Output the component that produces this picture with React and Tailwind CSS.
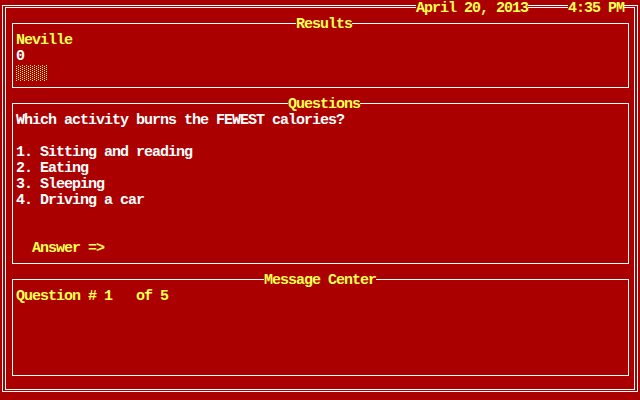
import React from 'react';

const Shade = () => (
    <svg width="32" height="16" className="block">
        <defs>
            <pattern id="shade" width="4" height="2" patternUnits="userSpaceOnUse">
                <rect x="2" y="0" width="1" height="1" fill="#ffff55" />
                <rect x="0" y="1" width="1" height="1" fill="#ffff55" />
            </pattern>
        </defs>
        <rect width="32" height="16" fill="url(#shade)" />
    </svg>
);

const Box = ({ title, titleLeft, height, children }) => (
    <div className={`relative ml-[6px] mr-[5px] mt-[15px] border border-white pt-[9px] pl-[3px] ${height}`}>
        <span className={`absolute top-[-7px] ${titleLeft} h-[16px] bg-[#aa0000] text-[#ffff55] whitespace-pre`}>{title}</span>
        {children}
    </div>
);

const App = () => {
    return (
        <div className="relative w-[640px] h-[400px] bg-[#aa0000] overflow-hidden pt-[5px] pl-[2px] font-['Liberation_Mono',monospace] font-bold text-[15px] leading-[16px] tracking-[-1px]">
            {/* double outer frame */}
            <div className="w-[636px] h-[387px] border border-white pt-[1px] pl-[2px]">
                <div className="w-[630px] h-[383px] border border-white">
                    <Box title="Results" titleLeft="left-[283px]" height="h-[65px]">
                        <div className="text-[#ffff55]">Neville</div>
                        <div className="text-white">0</div>
                        <Shade />
                    </Box>

                    <Box title="Questions" titleLeft="left-[275px]" height="h-[161px]">
                        <div className="text-white whitespace-pre">
                            <div>Which activity burns the FEWEST calories?</div>
                            <div className="h-[16px]"></div>
                            <div>1. Sitting and reading</div>
                            <div>2. Eating</div>
                            <div>3. Sleeping</div>
                            <div>4. Driving a car</div>
                            <div className="h-[32px]"></div>
                            <div className="pl-[16px] text-[#ffff55]">Answer =&gt;</div>
                        </div>
                    </Box>

                    <Box title="Message Center" titleLeft="left-[251px]" height="h-[97px]">
                        <div className="text-[#ffff55] whitespace-pre">Question # 1   of 5</div>
                    </Box>
                </div>
            </div>

            {/* date and time sit on the top border */}
            <span className="absolute top-0 left-[416px] h-[16px] pt-[1px] bg-[#aa0000] text-[#ffff55] whitespace-pre">April 20, 2013</span>
            <span className="absolute top-0 left-[568px] h-[16px] pt-[1px] bg-[#aa0000] text-[#ffff55] whitespace-pre">4:35 PM</span>
        </div>
    );
};

export default App;
